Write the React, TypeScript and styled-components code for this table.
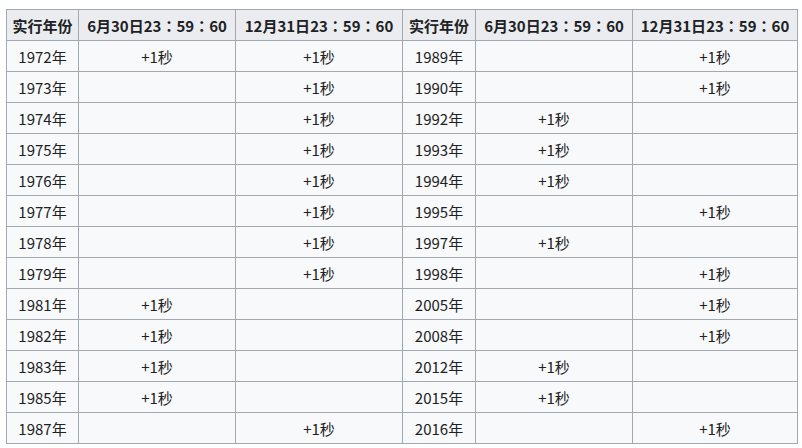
import React from 'react';
import styled, { createGlobalStyle } from 'styled-components';

const GlobalStyle = createGlobalStyle`
  html, body {
    margin: 0;
    padding: 0;
    background: #ffffff;
  }
  body {
    font-family: "Noto Sans CJK SC", "Noto Sans", sans-serif;
    color: #202122;
  }
`;

const Page = styled.div`
  padding: 9px 0 0 6px;
`;

const Table = styled.table`
  border-collapse: collapse;
  background: #f8f9fa;
  border: 1px solid #a2a9b1;
  font-size: 15px;
  table-layout: fixed;
  width: 792px;
`;

const Head = styled.th`
  background: #eaecf0;
  border: 1px solid #a2a9b1;
  font-weight: 700;
  height: 30px;
  padding: 0;
  text-align: center;
  white-space: nowrap;
`;

// centred full-width colon, as the TC face draws it
const Colon = styled.span`
  font-family: "Noto Sans CJK TC", sans-serif;
`;

const Cell = styled.td`
  border: 1px solid #a2a9b1;
  height: 30px;
  padding: 0;
  text-align: center;
  white-space: nowrap;
`;

type Row = [string, boolean, boolean];

const left: Row[] = [
  ['1972年', true, true],
  ['1973年', false, true],
  ['1974年', false, true],
  ['1975年', false, true],
  ['1976年', false, true],
  ['1977年', false, true],
  ['1978年', false, true],
  ['1979年', false, true],
  ['1981年', true, false],
  ['1982年', true, false],
  ['1983年', true, false],
  ['1985年', true, false],
  ['1987年', false, true],
];

const right: Row[] = [
  ['1989年', false, true],
  ['1990年', false, true],
  ['1992年', true, false],
  ['1993年', true, false],
  ['1994年', true, false],
  ['1995年', false, true],
  ['1997年', true, false],
  ['1998年', false, true],
  ['2005年', false, true],
  ['2008年', false, true],
  ['2012年', true, false],
  ['2015年', true, false],
  ['2016年', false, true],
];

const widths = [72, 157, 167, 73, 157, 165];

function TimeHead({ date }: { date: string }) {
  return (
    <Head>
      {date}23<Colon>：</Colon>59<Colon>：</Colon>60
    </Head>
  );
}

function HeadGroup() {
  return (
    <>
      <Head>实行年份</Head>
      <TimeHead date="6月30日" />
      <TimeHead date="12月31日" />
    </>
  );
}

const mark = (on: boolean) => (on ? '+1秒' : '');

export default function App() {
  return (
    <Page>
      <GlobalStyle />
      <Table>
        <colgroup>
          {widths.map((w, i) => <col key={i} style={{ width: w }} />)}
        </colgroup>
        <thead>
          <tr>
            <HeadGroup />
            <HeadGroup />
          </tr>
        </thead>
        <tbody>
          {left.map((row, i) => {
            const other = right[i];
            return (
              <tr key={row[0]}>
                <Cell>{row[0]}</Cell>
                <Cell>{mark(row[1])}</Cell>
                <Cell>{mark(row[2])}</Cell>
                <Cell>{other[0]}</Cell>
                <Cell>{mark(other[1])}</Cell>
                <Cell>{mark(other[2])}</Cell>
              </tr>
            );
          })}
        </tbody>
      </Table>
    </Page>
  );
}
